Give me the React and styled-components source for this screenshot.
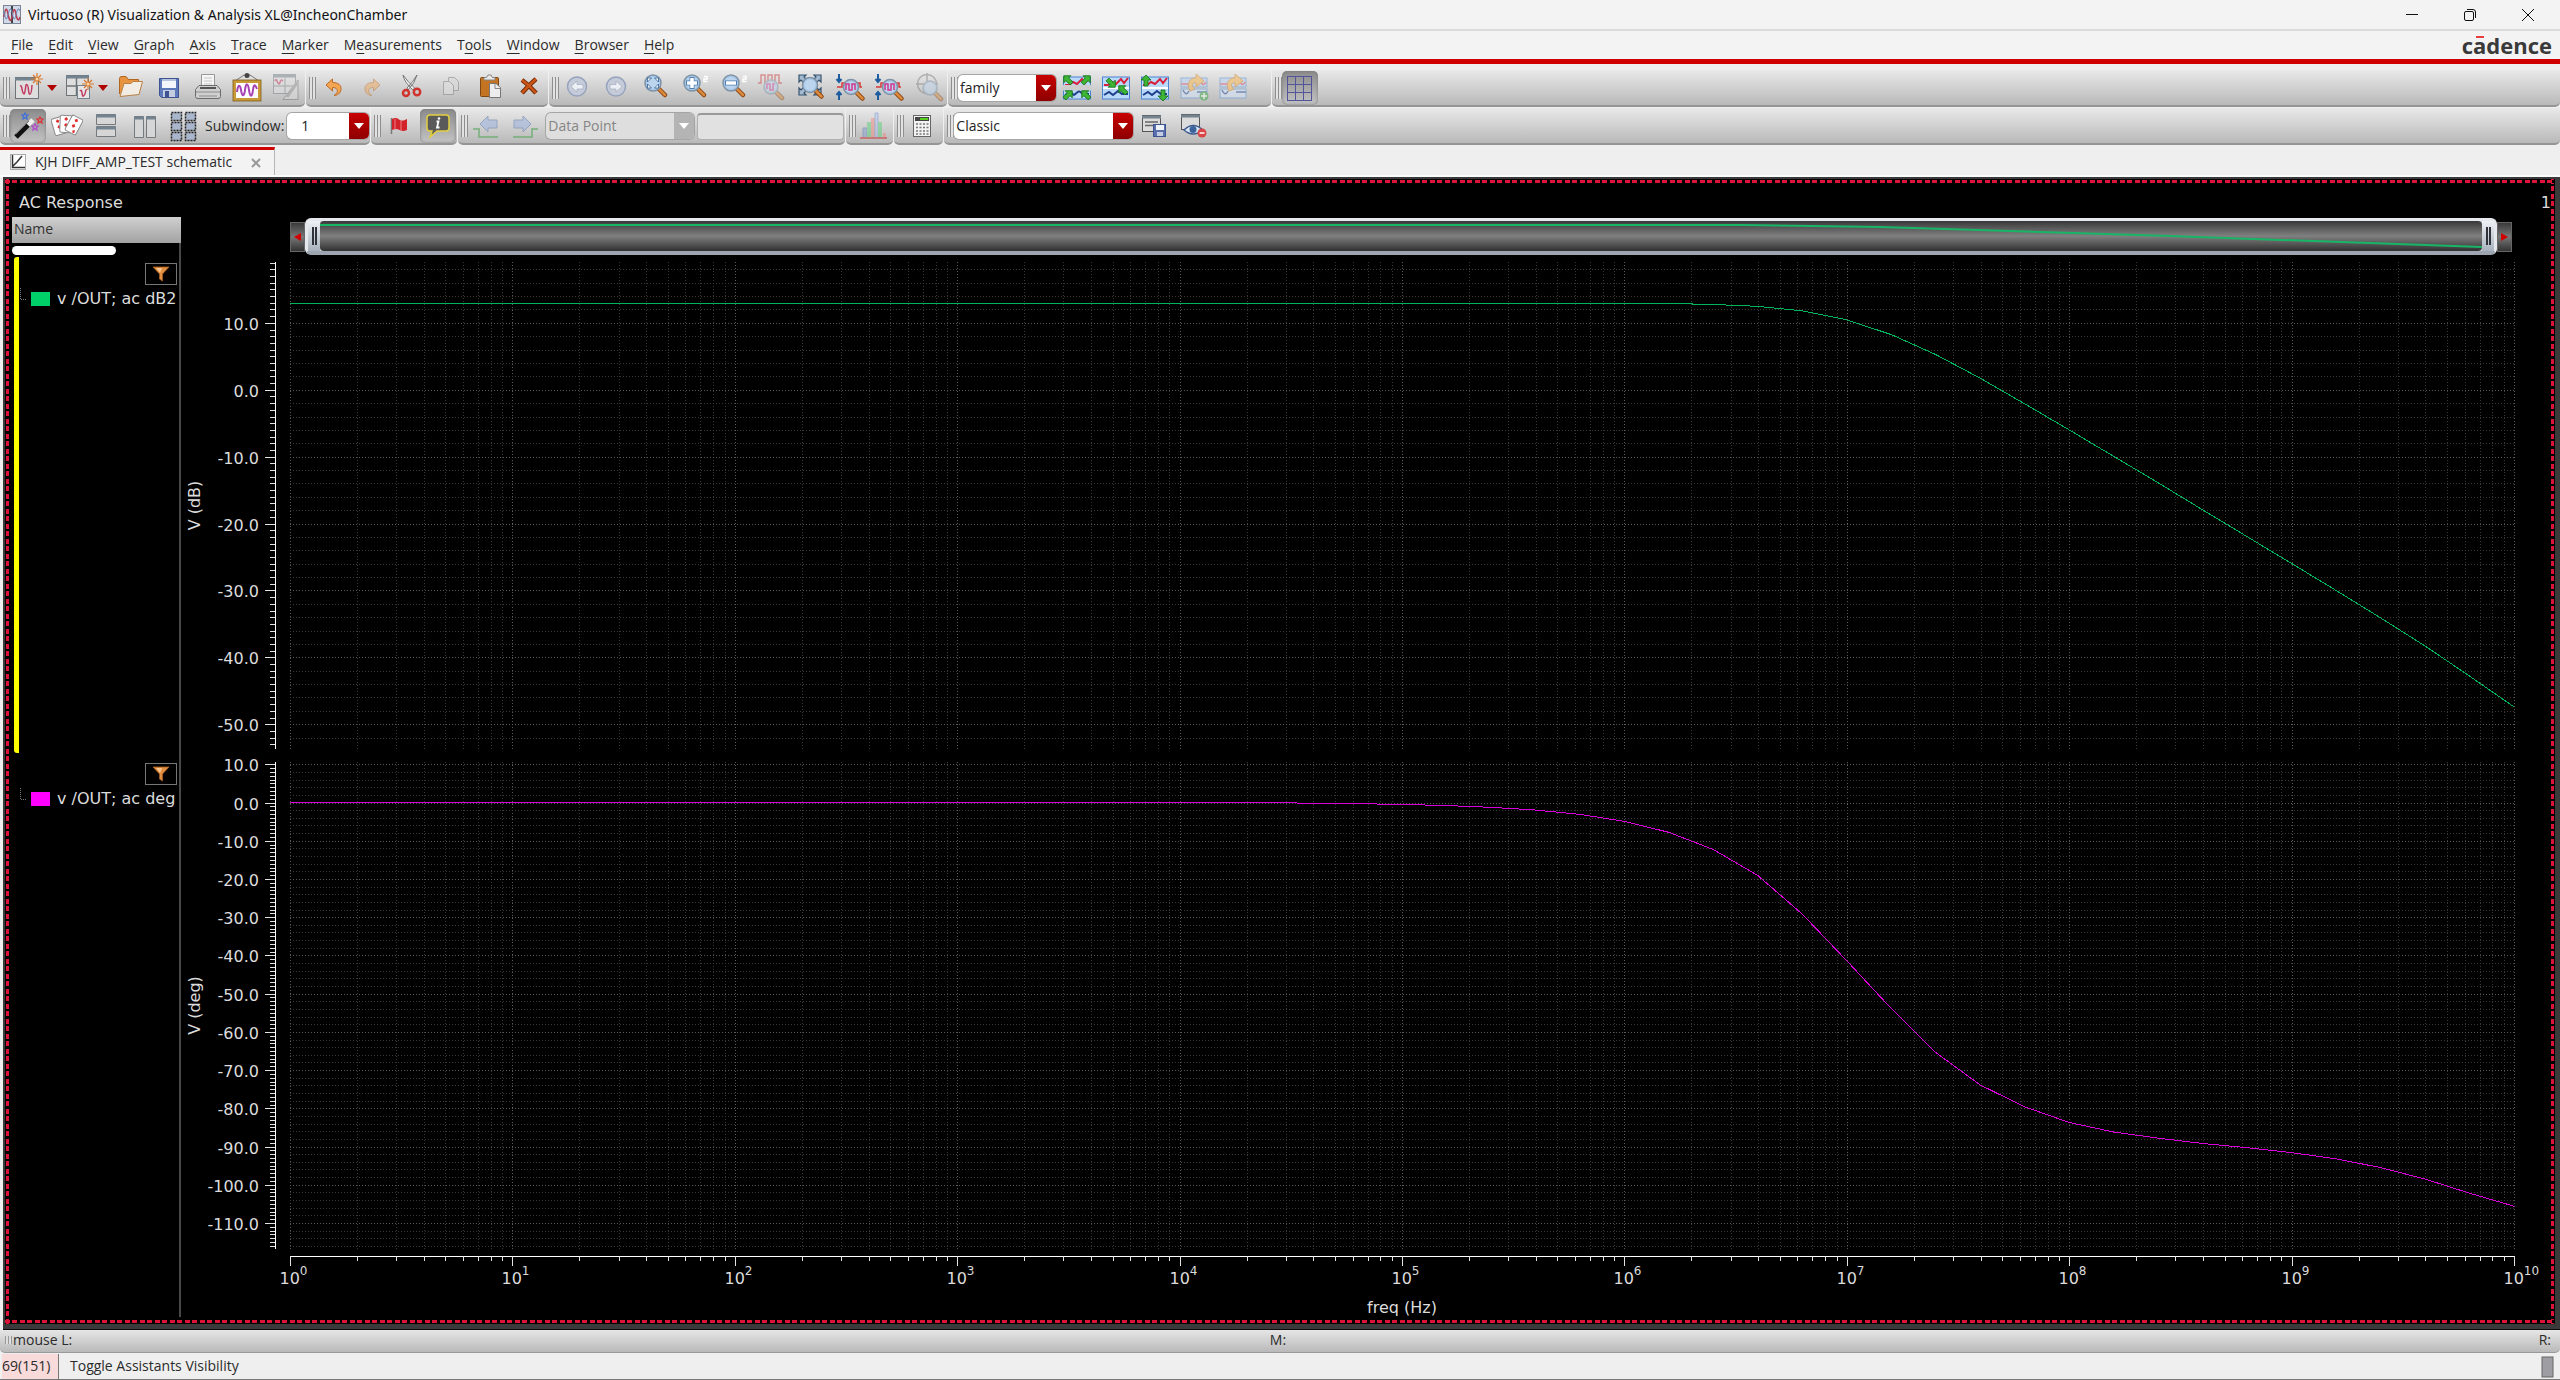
import React, { useLayoutEffect, useRef, useState } from "react";
import styled, { createGlobalStyle } from "styled-components";

const GlobalStyle = createGlobalStyle`
  * { box-sizing: border-box; }
  body {
    margin: 0;
    background: #efefef;
    color: #2b2b2b;
    font: 14px/20px "Open Sans", "Noto Sans", sans-serif;
  }
  button, input, select { font: inherit; color: inherit; margin: 0; }
  button { border: 0; padding: 0; background: none; }
`;

const Window = styled.div`
  display: flex;
  flex-direction: column;
  height: 100vh;
  min-height: 600px;
  overflow: hidden;
`;

/* ---------- title + menu ---------- */

const TitleBar = styled.header`
  display: flex;
  align-items: center;
  height: 29px;
  padding: 0 3px;
  gap: 7px;
  background: #f3f3f3;
  color: #111;
`;

const Title = styled.h1`
  flex: 1;
  margin: 0;
  font: 400 14px/20px "Noto Sans", sans-serif;
`;

const WindowControls = styled.div`
  display: flex;
  button { width: 58px; height: 28px; }
  svg { display: block; margin: 0 auto; }
`;

const MenuBar = styled.nav`
  display: flex;
  align-items: center;
  height: 35px;
  padding: 0 8px 0 4px;
  background: #f3f3f3;
  border-top: 2px solid #dadcdc;
  border-bottom: 5px solid #d00000;
`;

const MenuItem = styled.button`
  padding: 0 8px 0 7px;
  u { text-underline-offset: 3px; }
`;

const Logo = styled.div`
  position: relative;
  margin-left: auto;
  font: 700 22px/26px "Open Sans", sans-serif;
  color: #3a3a3a;
  &::before {
    content: "";
    position: absolute;
    left: 14px;
    top: 4px;
    width: 8px;
    height: 2px;
    background: #e53e3e;
  }
`;

/* ---------- toolbars ---------- */

const ToolbarRow = styled.div`
  display: flex;
  gap: 1px;
  margin-top: ${(p) => p.$top}px;
`;

const ToolGroup = styled.div`
  display: flex;
  align-items: center;
  gap: 3px;
  height: 37px;
  padding: 1px ${(p) => p.$end || 1}px 0 3px;
  flex: ${(p) => (p.$fill ? 1 : "none")};
  border-bottom: 2px solid #959595;
  border-radius: 0 0 5px 5px;
  background: linear-gradient(#e9e9e9, #b9b9b9);
`;

const Grip = styled.span`
  width: 7px;
  height: 22px;
  margin-right: -3px;
  background: repeating-linear-gradient(90deg, #8e8e8e 0 1px, #e2e2e2 1px 3px);
`;

const ToolButton = styled.button`
  display: flex;
  align-items: center;
  justify-content: center;
  width: ${(p) => (p.$narrow ? 12 : 36)}px;
  height: 34px;
  margin-left: ${(p) => (p.$narrow ? -3 : 0)}px;
  svg { display: block; flex: none; }
  &[aria-pressed="true"] {
    border-radius: 5px;
    background: linear-gradient(#8b8b8b, #c4c4c4);
    box-shadow: inset 0 0 3px #777;
  }
`;

const Combo = styled.span`
  display: flex;
  width: ${(p) => p.$width}px;
  height: 26px;
  border-radius: 5px;
  overflow: hidden;
  background: ${(p) => (p.$off ? "#dedede" : "#fff")};
  box-shadow: 0 0 0 1px #a5a5a5;
  select {
    flex: 1;
    min-width: 0;
    padding: 0 0 0 ${(p) => p.$indent || 2}px;
    border: 0;
    appearance: none;
    background: none;
    opacity: 1;
    color: ${(p) => (p.$off ? "#858585" : "#222")};
  }
  span {
    display: flex;
    align-items: center;
    justify-content: center;
    width: 20px;
    background: ${(p) => (p.$off ? "#b4b4b4" : "linear-gradient(#c80000, #8e0000)")};
  }
`;

const FieldLabel = styled.label`
  white-space: nowrap;
`;

const ValueInput = styled.input`
  width: 147px;
  height: 27px;
  border: 1px solid #b0b0b0;
  border-top: 2px solid #999;
  border-radius: 4px;
  background: #e1e1e1;
`;

/* ---------- tabs ---------- */

const TabBar = styled.div`
  display: flex;
  height: 30px;
  margin-top: 2px;
  border-bottom: 2px solid #fbfbfb;
`;

const Tab = styled.div`
  display: flex;
  align-items: center;
  width: 275px;
  padding: 0 9px 2px;
  gap: 7px;
  border-top: 3px solid #d00000;
  border-right: 1px solid #b5b5b5;
  background: #f3f3f3;
  white-space: nowrap;
  > button:last-child { margin-left: auto; width: 18px; height: 18px; }
`;

const TabName = styled.button`
  display: flex;
  align-items: center;
  gap: 8px;
`;

/* ---------- plot window ---------- */

const h = "repeating-linear-gradient(90deg, #dc1437 0 5px, #000 5px 7px, #dc1437 7px 12px, #000 12px 15px)";
const v = "repeating-linear-gradient(#dc1437 0 5px, #000 5px 7px, #dc1437 7px 12px, #000 12px 15px)";

const PlotFrame = styled.main`
  flex: 1;
  min-height: 0;
  display: flex;
  margin-left: 3px;
  padding: 2px 5px 5px 2px;
  background: #3a3a3a;
  border-bottom: 1px solid #0c0c0c;
`;

const PlotWindow = styled.section`
  flex: 1;
  min-width: 0;
  display: flex;
  flex-direction: column;
  padding: 2px 3px 2px 7px;
  color: #dcdcdc;
  font: 16px/20px "DejaVu Sans", sans-serif;
  background:
    ${h} 0 1px / 100% 3px no-repeat,
    ${h} 0 calc(100% - 1px) / 100% 3px no-repeat,
    ${v} 1px 0 / 3px 100% no-repeat,
    ${v} calc(100% - 1px) 0 / 3px 100% no-repeat,
    #000;
`;

const PlotHeader = styled.div`
  display: flex;
  justify-content: space-between;
  height: 36px;
  padding: 12px 1px 0 7px;
`;

const PlotBody = styled.div`
  flex: 1;
  min-height: 0;
  display: flex;
`;

const Legend = styled.aside`
  display: flex;
  flex-direction: column;
  width: 169px;
  margin-bottom: 5px;
  border-right: 2px solid #484848;
`;

const LegendHead = styled.div`
  height: 26px;
  margin-right: -2px;
  padding: 2px;
  background: linear-gradient(#d0d0d0, #a2a2a2);
  color: #333;
  font: 14px/20px "Open Sans", sans-serif;
`;

const LegendScroll = styled.div`
  width: 104px;
  height: 9px;
  margin: 3px 0 1px;
  border-radius: 5px;
  background: #fff;
`;

const LegendStrip = styled.div`
  flex: 1;
  display: flex;
  flex-direction: column;
  align-items: flex-end;
  margin: 1px 0 3px 2px;
  padding-top: 6px;
  border-left: 5px solid ${(p) => (p.$active ? "#ff0" : "#000")};
  border-radius: 3px;
`;

const FilterButton = styled.button`
  display: flex;
  align-items: center;
  justify-content: center;
  width: 32px;
  height: 22px;
  margin-right: 2px;
  border: 1px solid #777;
`;

const TraceRow = styled.div`
  align-self: stretch;
  display: flex;
  align-items: center;
  height: 28px;
  white-space: nowrap;
  svg { flex: none; }
`;

const Swatch = styled.span`
  flex: none;
  width: 19px;
  height: 14px;
  margin: 0 7px 0 4px;
  background: ${(p) => p.$color};
`;

const AxisSpace = styled.div`
  height: 61px;
`;

const Graph = styled.div`
  flex: 1;
  min-width: 0;
  display: flex;
  flex-direction: column;
  padding: 0 38px 0 109px;
`;

const PanBar = styled.div`
  display: flex;
  align-items: center;
  height: 39px;
  padding-right: 2px;
`;

const PanEnd = styled.button`
  width: 15px;
  height: 30px;
  display: flex;
  align-items: center;
  justify-content: center;
  border: 1px solid #666;
  background: linear-gradient(#3a3a3a, #777 50%, #333);
`;

const PanWindow = styled.div`
  flex: 1;
  min-width: 0;
  display: flex;
  height: 37px;
  border: 3px solid #e5e9ee;
  border-bottom: 4px solid #9ca5b0;
  border-radius: 6px;
  background: #cfd4da;
`;

const PanHandle = styled.span`
  display: flex;
  gap: 1px;
  align-items: center;
  justify-content: center;
  width: 12px;
  background: linear-gradient(#eef1f5, #a8b1bc);
  &::before, &::after { content: ""; width: 2px; height: 18px; background: #30343a; }
`;

const PanView = styled.div`
  flex: 1;
  min-width: 0;
  border-radius: 4px;
  background: linear-gradient(#383838, #808080 50%, #303030);
  svg { display: block; width: 100%; height: 100%; }
`;

const Strip = styled.div`
  flex: 1;
  min-height: 0;
  padding: 6px 0 7px;
`;

const Canvas = styled.svg`
  display: block;
  width: 100%;
  height: 100%;
  overflow: visible;
  fill: #dcdcdc;
`;

const AxisBox = styled.div`
  height: 66px;
`;

/* ---------- bottom bars ---------- */

const MouseBar = styled.div`
  display: grid;
  grid-template-columns: 1fr auto 1fr;
  align-items: center;
  height: 23px;
  padding: 0 9px 2px 5px;
  border-bottom: 1px solid #999;
  border-radius: 0 0 5px 5px;
  background: linear-gradient(#e6e6e6, #b9b9b9);
  span:first-child { display: flex; align-items: center; gap: 1px; }
  span:last-child { text-align: right; }
  i { width: 7px; height: 8px; background: repeating-linear-gradient(90deg, #999 0 1px, #ddd 1px 3px); }
`;

const StatusBar = styled.footer`
  display: flex;
  align-items: stretch;
  height: 27px;
  padding: 1px 6px 0 2px;
  border-bottom: 1px solid #777;
  line-height: 23px;
  span { width: 57px; border-right: 1px solid #777; background: #f8dada; }
  p { flex: 1; margin: 0; padding-left: 11px; }
  svg { align-self: center; }
`;

/* ---------- icons ---------- */

const Svg = ({ children, fade = 1 }) => (
  <svg width="32" height="32" viewBox="0 0 32 32" fill="none" opacity={fade} aria-hidden="true">
    {children}
  </svg>
);

const Burst = ({ x, y }) => (
  <g transform={`translate(${x} ${y})`} stroke="#d9772b" strokeWidth="1.2">
    <path d="M0-6V6M-6 0H6M-4-4L4 4M4-4L-4 4" />
    <circle r="1.500" fill="#ffd9a0" stroke="none" />
  </g>
);

const Lens = ({ x = 14, y = 11, r = 8, children }) => (
  <>
    <path d={`M${x + r - 2} ${y + r - 2}l6 6`} stroke="#8a4210" strokeWidth="4.5" strokeLinecap="round" />
    <path d={`M${x + r - 2} ${y + r - 2}l6 6`} stroke="#d98a3a" strokeWidth="2.5" strokeLinecap="round" />
    <circle cx={x} cy={y} r={r} fill="#a9c8e8" stroke="#7f93a6" strokeWidth="1.5" />
    <circle cx={x} cy={y} r={r - 2} fill="#cfe1f3" opacity="0.5" />
    {children}
  </>
);

const Sup2 = () => <path d="M26 4.500h3v2.500h-3v2.500h3.500" stroke="#fff" strokeWidth="1.500" />;

const Circle = ({ d }) => (
  <>
    <circle cx="16" cy="14.500" r="9.500" fill="#c5cbd8" stroke="#96a3bd" strokeWidth="1.500" />
    <path d={d} fill="#eceff4" stroke="#a4aebf" strokeWidth="0.700" />
  </>
);

const Undo = () => (
  <path
    d="M8 13L14.500 7V10.500C20 10.500 23.500 13 23 17.500C22.700 21 19.500 23.500 16 23.500C19 21.500 20 19.500 19 17.500C18.200 16 16.500 15.500 14.500 15.500V19Z"
    fill="#f2a552" stroke="#bc6a24"
  />
);

const MiniWaves = () => (
  <>
    <rect x="2.500" y="5" width="27" height="22" fill="#b9d8fa" stroke="#4a86cf" />
    <path d="M3 16H29" stroke="#fff" strokeWidth="2" />
    <path d="M4 13l4 0 4-3 4 2 5-5 3 4 4-5" stroke="#d8203a" strokeWidth="2" />
    <path d="M4 23l5-3 4 3 5-4 4 3h6" stroke="#1d3f8c" strokeWidth="2" />
  </>
);

// head points up; rotate for the other directions
const GreenArrow = ({ x, y, turn = 0 }) => (
  <path
    transform={`translate(${x} ${y}) rotate(${turn})`}
    d="M0-6L5-1H2V5H-2V-1H-5Z" fill="#3eb534" stroke="#14701a" strokeWidth="0.800"
  />
);

const LevelZoom = () => (
  <>
    <path d="M5 2V9M2.500 7L5 10L7.500 7M5 28V20M2.500 23L5 20L7.500 23" stroke="#1d5c9f" strokeWidth="2" />
    <path d="M3 15H8V11H11M22 11H26V15H28" stroke="#d63a3a" strokeWidth="1.500" />
    <Lens x={17} y={15} r={7.500}>
      <path d="M12 18V12H15V18H18V12H21V18" stroke="#d1358c" strokeWidth="1.500" />
    </Lens>
  </>
);

const StepWave = () => (
  <>
    <rect x="3" y="6" width="26" height="9" fill="#bcd5f2" stroke="#6f9fd8" />
    <rect x="3" y="17" width="26" height="9" fill="#d5e5f8" stroke="#6f9fd8" />
    <path d="M3 12H11M23 10Q26 15 28 10" stroke="#e0636d" strokeWidth="1.500" />
    <path d="M5 18Q8 25 11 19M19 20H29" stroke="#41609f" strokeWidth="1.500" />
    <path d="M12 19C8 12 12 5 18 6V2L26 9L18 15V11C14 10 13 14 17 17Z" fill="#f5bc62" stroke="#d2924a" />
  </>
);

const Card = ({ turn, x, y }) => (
  <g transform={`translate(${x} ${y}) rotate(${turn})`}>
    <rect x="-6" y="-8.500" width="12" height="17" rx="1.500" fill="#fff" stroke="#8b8b8b" />
    <path d="M-2-5l2 2 2-2-2-2zM-2 1l2 2 2-2-2-2zM1 6l2 2 1-2-1-2z" fill="#e03030" />
  </g>
);

const Star = ({ x, y, color }) => (
  <path
    transform={`translate(${x} ${y})`} stroke={color} strokeWidth="1.200"
    d="M0-3L1-1H3L1.500 0.500L2 3L0 1.500L-2 3L-1.500 0.500L-3-1H-1Z"
  />
);

const icons = {
  newWindow: <Svg><rect x="3.500" y="5.500" width="23" height="21" fill="#dedede" stroke="#6f7478" /><path d="M3 7H27" stroke="#73838f" strokeWidth="3" /><path d="M8 14Q9.500 13 10 17T12 22Q13 21 13.500 16T15 13Q16 13 16.500 18T18 22Q19.500 22 20 13" stroke="#c23b62" strokeWidth="1.500" /><Burst x={25} y={7} /></Svg>,
  newSub: <Svg><rect x="3.500" y="3.500" width="22" height="20" fill="#dedede" stroke="#6f7478" /><path d="M3 5H26" stroke="#73838f" strokeWidth="3" /><path d="M3 14H26M13.500 6V24" stroke="#6f7478" strokeWidth="1.500" /><rect x="14.500" y="13.500" width="12" height="13" fill="#e5e5e5" stroke="#73838f" /><path d="M17 19Q18.500 17 19 21T20.500 24Q22 23 22.500 20T24 18" stroke="#c23b62" strokeWidth="1.500" /><Burst x={25} y={12} /></Svg>,
  open: <Svg><path d="M5.500 22V6.500Q5.500 4.500 8 4.500H12L14.500 7.500H24.500V12" fill="#e89340" stroke="#b0641f" /><path d="M6 24.500L10 11.500H17L19 9.500H28.500L25 22.500Z" fill="#f1ece4" stroke="#b98043" /></Svg>,
  save: <Svg><path d="M6.500 6.500H25.500V25.500H8.500L6.500 23.500Z" fill="#5c79bc" stroke="#3d5490" /><rect x="9" y="7" width="14" height="9" fill="#f3f6fb" /><path d="M9 8H23" stroke="#b5c2dd" strokeWidth="2" /><rect x="10" y="18" width="12" height="7" fill="#c4cde0" /><rect x="12" y="19" width="4" height="6" fill="#3d5490" /></Svg>,
  print: <Svg><path d="M9.500 15V2.500H22.500V15" fill="#f5f5f5" stroke="#999" /><path d="M12 6H20M12 9H20M12 12H20" stroke="#c6c6c6" /><path d="M3.500 17.500L7 13.500H25L28.500 17.500V24.500Q28.500 26.500 26 26.500H6Q3.500 26.500 3.500 24.500Z" fill="#cfcfcf" stroke="#6c6c6c" /><path d="M8 16H24" stroke="#555" strokeWidth="2" /><path d="M4 20H28M7 24H25" stroke="#8d8d8d" /></Svg>,
  image: <Svg><path d="M4 9L13 3H19L28 9" stroke="#777" /><circle cx="16" cy="3.500" r="2.500" fill="#444" /><rect x="3.500" y="9.500" width="25" height="18" fill="#fff" stroke="#c99a38" strokeWidth="3" /><rect x="2" y="8" width="28" height="21" stroke="#7d5c1b" strokeWidth="0.800" /><path d="M6 20C7 12 9 12 10 18S13 26 14 18S17 11 18 18S21 26 22 18S25 14 26 17" stroke="#a743b5" strokeWidth="2" /></Svg>,
  editWindow: <Svg fade={0.5}><rect x="3.500" y="2.500" width="22" height="19" fill="#e0e0e0" stroke="#7b8085" /><path d="M3 4H26" stroke="#73838f" strokeWidth="3" /><path d="M15 6V22M3 14H15M15 14H25" stroke="#7b8085" /><path d="M5 9Q6 6 7 9T9 12Q10 11 10.500 9T13 9" stroke="#c23b62" strokeWidth="1.500" /><path d="M13 27.500L28 8V27.500Z" fill="#ddd" stroke="#777" /><path d="M17 25L27 11" stroke="#999" strokeWidth="3" /></Svg>,
  undo: <Svg><Undo /></Svg>,
  redo: <Svg fade={0.45}><g transform="translate(31 0) scale(-1 1)"><Undo /></g></Svg>,
  cut: <Svg><path d="M7 3Q8 10 17 18L18.500 16Q11 9 7 3ZM21 3Q19 11 12 18L11 16Q17 10 21 3Z" fill="#f4f4f4" stroke="#777" /><circle cx="10" cy="21" r="3" stroke="#d0342c" strokeWidth="2.500" /><circle cx="21" cy="20" r="3.200" stroke="#d0342c" strokeWidth="2.500" /></Svg>,
  copy: <Svg fade={0.6}><path d="M13.500 5.500H19.500L23.500 9.500V18.500H13.500Z" fill="#d9d9d9" stroke="#8c8c8c" /><path d="M8.500 9.500H14.500L18.500 13.500V22.500H8.500Z" fill="#dedede" stroke="#8c8c8c" /></Svg>,
  paste: <Svg><rect x="6.500" y="5.500" width="18" height="19" rx="1" fill="#c47322" stroke="#7f4711" /><path d="M10 8V5.500H12.500L14 3H17L18.500 5.500H21V8Z" fill="#e8e8e8" stroke="#888" /><path d="M15.500 11.500H22L26.500 15.500V25.500H15.500Z" fill="#ededed" stroke="#777" /><path d="M21 12V16.500H26" stroke="#888" /></Svg>,
  remove: <Svg><path d="M9 8Q16 13 23 21M23 7Q16 13 9 21" stroke="#762c06" strokeWidth="4.500" /><path d="M9 8Q16 13 23 21M23 7Q16 13 9 21" stroke="#cb5518" strokeWidth="2.500" /></Svg>,
  back: <Svg><Circle d="M10 14.500L16 9V12.500H22V17H16V20Z" /></Svg>,
  forward: <Svg><Circle d="M22 14.500L16 9V12.500H10V17H16V20Z" /></Svg>,
  zoomFit: <Svg><Lens><path d="M8.500 6H12.500L8.500 10ZM19.500 6V10L15.500 6ZM8.500 16V12L12.500 16ZM19.500 16H15.500L19.500 12Z" fill="#fff" stroke="#2f6096" strokeWidth="0.800" /></Lens></Svg>,
  zoomIn: <Svg><Lens><path d="M14 5V17M8 11H20" stroke="#4f7dad" strokeWidth="5" /><path d="M14 6V16M9 11H19" stroke="#fff" strokeWidth="3.500" /></Lens><Sup2 /></Svg>,
  zoomOut: <Svg><Lens><path d="M8 11H20" stroke="#4f7dad" strokeWidth="5" /><path d="M9 11H19" stroke="#fff" strokeWidth="3.500" /></Lens><Sup2 /></Svg>,
  zoomWave: <Svg fade={0.45}><path d="M2 11H5V3H9V11H12V3H16V11H19V3H23V11H26" stroke="#c33" strokeWidth="1.500" /><Lens x={15} y={15} r={7}><path d="M11 17V12H14V18H17V12H19" stroke="#d1358c" strokeWidth="1.500" /></Lens></Svg>,
  fitAll: <Svg><path d="M4 10V3H11L9 5L12 8L9 11L6 8ZM26 10V3H19L21 5L18 8L21 11L24 8ZM4 16V23H11L9 21L12 18L9 15L6 18ZM26 16V23H19L21 21L18 18L21 15L24 18Z" fill="#a5bbd2" stroke="#34526e" strokeWidth="1.200" /><Lens x={15} y={13} r={7.500} /></Svg>,
  levelA: <Svg><LevelZoom /></Svg>,
  levelB: <Svg><LevelZoom /></Svg>,
  target: <Svg fade={0.45}><circle cx="15" cy="12" r="9.500" stroke="#777" strokeWidth="1.500" /><path d="M15 1V23M4 12H26" stroke="#777" strokeWidth="1.500" /><Lens x={18} y={16} r={7} /></Svg>,
  expand: <Svg><MiniWaves /><path d="M1 13H31V18.500H1Z" fill="#cdcdcd" /><GreenArrow x={7} y={8} turn={-45} /><GreenArrow x={25} y={8} turn={45} /><GreenArrow x={7} y={23} turn={45} /><GreenArrow x={25} y={23} turn={-45} /></Svg>,
  collapse: <Svg><MiniWaves /><GreenArrow x={11} y={11} turn={135} /><GreenArrow x={23} y={18} turn={-45} /></Svg>,
  spread: <Svg><MiniWaves /><GreenArrow x={7} y={9} /><GreenArrow x={24} y={23} turn={180} /></Svg>,
  stepAdd: <Svg fade={0.6}><StepWave /><circle cx="26" cy="24" r="4.500" fill="#4fae57" /><path d="M26 21V27M23 24H29" stroke="#fff" strokeWidth="1.500" /></Svg>,
  step: <Svg fade={0.6}><StepWave /></Svg>,
  grid: <Svg><path d="M3.500 4V29M11.500 4V29M19.500 4V29M27.500 4V29M3 4.500H28M3 12.500H28M3 20.500H28M3 28.500H28" stroke="#54549c" /></Svg>,
  wand: <Svg><path d="M4 27L19 12" stroke="#111" strokeWidth="5" /><path d="M16 15L21 10" stroke="#eee" strokeWidth="5" /><path d="M4 24L17 11" stroke="#777" /><Star x={13} y={6} color="#3f6fd8" /><Star x={28} y={10} color="#e03030" /><Star x={23} y={17} color="#b04ad0" /></Svg>,
  cards: <Svg><Card x={8} y={16} turn={-16} /><Card x={15} y={14} turn={2} /><Card x={23} y={15} turn={28} /></Svg>,
  rows: <Svg><path d="M6.500 4.500H25.500V14.500H6.500ZM6.500 16.500H25.500V26.500H6.500Z" fill="#d6d6d6" stroke="#74797d" /><path d="M6 6H26M6 18H26" stroke="#73838f" strokeWidth="3" /></Svg>,
  columns: <Svg><path d="M5.500 6.500H14.500V27.500H5.500ZM17.500 6.500H26.500V27.500H17.500Z" fill="#d6d6d6" stroke="#74797d" /><path d="M5 8H15M17 8H27" stroke="#73838f" strokeWidth="3" /></Svg>,
  tiles: <Svg><path d="M3.500 2.500H13.500V10.500H3.500ZM17.500 2.500H27.500V10.500H17.500ZM3.500 12.500H13.500V20.500H3.500ZM17.500 12.500H27.500V20.500H17.500ZM3.500 22.500H13.500V30.500H3.500ZM17.500 22.500H27.500V30.500H17.500Z" fill="#aab6cc" stroke="#222" strokeWidth="1.500" strokeDasharray="2 1" /></Svg>,
  flag: <Svg><path d="M8.500 8V24" stroke="#777" strokeWidth="1.500" /><path d="M9 9Q13 7 16 9.500T24 9V20Q20 22 16.500 20T9 20Z" fill="#d2232a" /><path d="M12 9V20M18 10V21" stroke="#f08080" /></Svg>,
  info: <Svg><path d="M8 5H24Q27 5 27 8V18Q27 21 24 21H15L8 27L10 21H8Q5 21 5 18V8Q5 5 8 5Z" fill="#5a5a5a" stroke="#e2cf3e" strokeWidth="1.500" /><path d="M14.500 11.500H16.500L15 17.500H17.500" stroke="#fff" strokeWidth="1.800" /><circle cx="17" cy="8.500" r="1.300" fill="#fff" /></Svg>,
  prev: <Svg fade={0.7}><path d="M3 19H9V27H28" stroke="#6fae74" strokeWidth="2" /><path d="M10 14L18 6V10H27V18H18V22Z" fill="#aabbdc" stroke="#7d90b8" /></Svg>,
  next: <Svg fade={0.7}><path d="M29 19H23V27H4" stroke="#6fae74" strokeWidth="2" /><path d="M22 14L14 6V10H5V18H14V22Z" fill="#aabbdc" stroke="#7d90b8" /></Svg>,
  bars: <Svg fade={0.5}><path d="M5 28V18H9V28" fill="#88a0d0" stroke="#5f7ab8" /><path d="M9 28V12H13V28" fill="#5fd07a" /><path d="M13 28V8H17V28" fill="#f08a80" /><path d="M17 28V3H20V28" fill="#b5c6ef" stroke="#6f8fd0" /><path d="M20 28V12H24V28" fill="#5fd07a" /><path d="M25 28V23H28V28" fill="#f08a80" /><path d="M2 28H29" stroke="#c33" strokeWidth="2" /></Svg>,
  calc: <Svg><rect x="7.500" y="5.500" width="17" height="21" fill="#f2f2f2" stroke="#666" /><path d="M9 9H23" stroke="#444" strokeWidth="4" /><path d="M14 9H22" stroke="#58d020" strokeWidth="2" /><path d="M10 14H23M10 17.500H23M10 21H23M10 24H23" stroke="#777" strokeWidth="1.500" strokeDasharray="2 1.500" /></Svg>,
  saveLayout: <Svg><rect x="4.500" y="5.500" width="18" height="16" fill="#dcdcdc" stroke="#555" /><path d="M4 7H23" stroke="#73838f" strokeWidth="3" /><path d="M7 12H20M7 15.500H20" stroke="#666" strokeWidth="1.500" /><rect x="15.500" y="14.500" width="12" height="12" fill="#5a6fae" stroke="#3d5490" /><rect x="18" y="15" width="8" height="5" fill="#eef2fa" /><rect x="19" y="22" width="6" height="4" fill="#c4cde0" /></Svg>,
  hideLayout: <Svg><rect x="4.500" y="4.500" width="18" height="15" fill="#dcdcdc" stroke="#555" /><path d="M4 6H23" stroke="#73838f" strokeWidth="3" /><path d="M7 20Q16 11 26 20Q16 28 7 20Z" fill="#dbe6f5" stroke="#3d5a8c" strokeWidth="1.500" /><circle cx="16" cy="19.500" r="3.500" fill="#3c639c" /><circle cx="25" cy="23" r="4.500" fill="#d94444" /><path d="M22.500 23H27.500" stroke="#fff" strokeWidth="1.500" /></Svg>,
};

const Caret = ({ color = "#b00000" }) => (
  <svg width="10" height="6" viewBox="0 0 10 6" aria-hidden="true"><path d="M0 0H10L5 6Z" fill={color} /></svg>
);

const Funnel = () => (
  <svg width="18" height="16" viewBox="0 0 18 16" aria-hidden="true">
    <path d="M1 1H17L10.500 8V15L7.500 13V8Z" fill="#e08f42" stroke="#a65c1c" strokeWidth="0.800" />
    <path d="M4 2H10L8 7Z" fill="#f8c38d" />
  </svg>
);

function Tool({ name, label, pressed, disabled }) {
  return (
    <ToolButton type="button" title={label} aria-label={label} aria-pressed={pressed} disabled={disabled}>
      {icons[name]}
    </ToolButton>
  );
}

function Drop({ label }) {
  return <ToolButton type="button" $narrow aria-label={label}><Caret /></ToolButton>;
}

function ComboBox({ id, label, options, width, indent, off }) {
  return (
    <Combo $width={width} $indent={indent} $off={off}>
      <select id={id} aria-label={label} disabled={off}>
        {options.map((o) => <option key={o}>{o}</option>)}
      </select>
      <span><Caret color="#fff" /></span>
    </Combo>
  );
}

/* ---------- charts ---------- */

// one sample every fifth of a decade, from 10^0 to 10^10
const gainTail = [12.9, 12.9, 12.75, 12.47, 11.8, 10.45, 8.25, 5.26, 1.73, -2.1, -6, -9.95, -13.9, -17.95, -21.96, -25.96, -30, -34.1, -38.3, -42.8, -47.4];
const gain = [...Array(30).fill(12.95), ...gainTail];
const phaseTail = [-0.5, -0.8, -1.25, -1.97, -3.1, -4.93, -7.8, -12.3, -19.1, -29.2, -41.4, -53.9, -65.4, -73.9, -79.6, -83.7, -86.2, -87.8, -89.2, -90.3, -91.6, -93.2, -95.5, -98.5, -102.2, -105.6];
const phase = [...Array(23).fill(0), -0.2, -0.3, ...phaseTail];

const DECADES = 10;
const range = (from, to, step) => {
  const out = [];
  for (let n = from; n <= to; n += step) out.push(n);
  return out;
};

function useSize() {
  const ref = useRef(null);
  const [size, setSize] = useState({ w: 0, h: 0 });
  useLayoutEffect(() => {
    const measure = () => {
      const box = ref.current.getBoundingClientRect();
      setSize({ w: box.width, h: box.height });
    };
    measure();
    const watcher = new ResizeObserver(measure);
    watcher.observe(ref.current);
    return () => watcher.disconnect();
  }, []);
  return [ref, size];
}

const logTicks = [];
for (let d = 0; d < DECADES; d++) {
  for (let k = 1; k < 10; k++) logTicks.push({ at: d + Math.log10(k), major: k === 1 });
}
logTicks.push({ at: DECADES, major: true });

function Chart({ title, data, color, top, bottom }) {
  const [ref, { w, h: height }] = useSize();
  const x = (d) => Math.round((d / DECADES) * w) + 0.5;
  const y = (val) => ((top - val) / (top - bottom)) * height;
  const yr = (val) => Math.round(y(val)) + 0.5;
  const values = range(Math.ceil(bottom), Math.floor(top), 1);

  return (
    <Canvas ref={ref} role="img" aria-label={title}>
      <g strokeDasharray="1 2">
        {logTicks.map((t) => (
          <path key={t.at} d={`M${x(t.at)} 0V${height}`} stroke={t.major ? "#5a5a5a" : "#383838"} />
        ))}
        {values.filter((n) => n % 2 === 0).map((n) => (
          <path key={n} d={`M0 ${yr(n)}H${w}`} stroke={n % 10 === 0 ? "#5a5a5a" : "#383838"} />
        ))}
      </g>
      <path d={`M-14.500 0V${height}`} stroke="#fff" />
      {values.map((n) => (
        <path key={n} d={`M${n % 10 === 0 ? -25 : -20} ${yr(n)}H-15`} stroke="#e4e4e4" />
      ))}
      {values.filter((n) => n % 10 === 0).map((n) => (
        <text key={n} x="-31" y={yr(n) + 6.500} textAnchor="end">{n.toFixed(1)}</text>
      ))}
      <text transform={`translate(-90 ${height / 2}) rotate(-90)`} textAnchor="middle">{title}</text>
      <polyline
        points={data.map((val, i) => `${(i / 50) * w},${y(val)}`).join(" ")}
        fill="none" stroke={color} strokeWidth="1" shapeRendering="crispEdges"
      />
    </Canvas>
  );
}

function FreqAxis() {
  const [ref, { w }] = useSize();
  const x = (d) => Math.round((d / DECADES) * w) + 0.5;
  return (
    <AxisBox>
      <Canvas ref={ref} role="img" aria-label="freq (Hz)">
        <path d={`M0 0.500H${w + 1}`} stroke="#fff" />
        {logTicks.map((t) => (
          <path key={t.at} d={`M${x(t.at)} 0V${t.major ? 10 : 5}`} stroke="#e4e4e4" />
        ))}
        {range(0, DECADES, 1).map((d) => (
          <text key={d} x={x(d) - 11} y="28">
            10<tspan dy="-9" fontSize="12">{d}</tspan>
          </text>
        ))}
        <text x={w / 2} y="57" textAnchor="middle">freq (Hz)</text>
      </Canvas>
    </AxisBox>
  );
}

const menus = [["", "F", "ile"], ["", "E", "dit"], ["", "V", "iew"], ["", "G", "raph"], ["", "A", "xis"], ["", "T", "race"], ["", "M", "arker"], ["M", "e", "asurements"], ["T", "o", "ols"], ["", "W", "indow"], ["", "B", "rowser"], ["", "H", "elp"]];

const traces = [
  { name: "v /OUT; ac dB2", color: "#00d068", active: true },
  { name: "v /OUT; ac deg", color: "#ff00ff" },
];

function App() {
  return (
    <Window>
      <GlobalStyle />
      <TitleBar>
        <svg width="18" height="19" viewBox="0 0 18 19" fill="none" aria-hidden="true">
          <rect x="0.500" y="0.500" width="17" height="18" fill="#cfd9e8" stroke="#7a8698" />
          <path d="M9 1V18" stroke="#111" strokeWidth="1.500" />
          <path d="M1 12Q3-2 5 9T9 12Q11-1 13 9T17 12" stroke="#b83a4c" strokeWidth="1.500" />
          <path d="M1 6Q3 20 5 10T9 6Q11 20 13 10T17 6" stroke="#6f88b8" />
        </svg>
        <Title>Virtuoso (R) Visualization &amp; Analysis XL@IncheonChamber</Title>
        <WindowControls>
          <button type="button" aria-label="Minimize"><svg width="14" height="14" stroke="#111"><path d="M1 6.500H13" /></svg></button>
          <button type="button" aria-label="Restore"><svg width="14" height="14" fill="none" stroke="#111"><rect x="1.500" y="3.500" width="9" height="9" rx="1.500" /><path d="M4 1.500H10Q12.500 1.500 12.500 4V10" /></svg></button>
          <button type="button" aria-label="Close"><svg width="14" height="14" stroke="#111"><path d="M1 1L13 13M13 1L1 13" /></svg></button>
        </WindowControls>
      </TitleBar>

      <MenuBar>
        {menus.map(([a, key, b]) => (
          <MenuItem type="button" key={a + key + b}>{a}<u>{key}</u>{b}</MenuItem>
        ))}
        <Logo>cadence</Logo>
      </MenuBar>

      <ToolbarRow $top={6}>
        <ToolGroup>
          <Grip />
          <Tool name="newWindow" label="New window" />
          <Drop label="New window options" />
          <Tool name="newSub" label="New subwindow" />
          <Drop label="New subwindow options" />
          <Tool name="open" label="Open" />
          <Tool name="save" label="Save" />
          <Tool name="print" label="Print" />
          <Tool name="image" label="Save image" />
          <Tool name="editWindow" label="Edit window" disabled />
        </ToolGroup>
        <ToolGroup>
          <Grip />
          <Tool name="undo" label="Undo" />
          <Tool name="redo" label="Redo" disabled />
          <Tool name="cut" label="Cut" />
          <Tool name="copy" label="Copy" disabled />
          <Tool name="paste" label="Paste" />
          <Tool name="remove" label="Delete" />
        </ToolGroup>
        <ToolGroup>
          <Grip />
          <Tool name="back" label="Previous view" disabled />
          <Tool name="forward" label="Next view" disabled />
          <Tool name="zoomFit" label="Fit" />
          <Tool name="zoomIn" label="Zoom in by 2" />
          <Tool name="zoomOut" label="Zoom out by 2" />
          <Tool name="zoomWave" label="Zoom to waveform" disabled />
          <Tool name="fitAll" label="Fit all" />
          <Tool name="levelA" label="Fit Y" />
          <Tool name="levelB" label="Fit smart" />
          <Tool name="target" label="Centre" disabled />
        </ToolGroup>
        <ToolGroup $end={20}>
          <Grip />
          <ComboBox label="Strip mode" options={["family"]} width={98} />
          <Tool name="expand" label="Split all strips" />
          <Tool name="collapse" label="Combine all" />
          <Tool name="spread" label="Split current strip" />
          <Tool name="stepAdd" label="Add to strip" disabled />
          <Tool name="step" label="Move to strip" disabled />
        </ToolGroup>
        <ToolGroup $fill>
          <Grip />
          <Tool name="grid" label="Grid" pressed />
        </ToolGroup>
      </ToolbarRow>

      <ToolbarRow $top={1}>
        <ToolGroup>
          <Grip />
          <Tool name="wand" label="Toggle Assistants Visibility" pressed />
          <Tool name="cards" label="Card layout" />
          <Tool name="rows" label="Horizontal layout" />
          <Tool name="columns" label="Vertical layout" />
          <Tool name="tiles" label="Auto layout" />
          <FieldLabel htmlFor="subwindow">Subwindow:</FieldLabel>
          <ComboBox id="subwindow" options={["1"]} width={82} indent={14} />
        </ToolGroup>
        <ToolGroup>
          <Grip />
          <Tool name="flag" label="Marker" />
          <Tool name="info" label="Tracking cursor" pressed />
        </ToolGroup>
        <ToolGroup>
          <Grip />
          <Tool name="prev" label="Previous edge" disabled />
          <Tool name="next" label="Next edge" disabled />
          <ComboBox label="Search type" options={["Data Point"]} width={148} off />
          <ValueInput aria-label="Search value" disabled />
        </ToolGroup>
        <ToolGroup>
          <Grip />
          <Tool name="bars" label="Histogram" disabled />
        </ToolGroup>
        <ToolGroup $end={3}>
          <Grip />
          <Tool name="calc" label="Calculator" />
        </ToolGroup>
        <ToolGroup $fill>
          <Grip />
          <ComboBox label="Workspace" options={["Classic"]} width={179} />
          <Tool name="saveLayout" label="Save workspace" />
          <Tool name="hideLayout" label="Delete workspace" />
        </ToolGroup>
      </ToolbarRow>

      <TabBar>
        <Tab>
          <TabName type="button">
            <svg width="18" height="18" viewBox="0 0 18 18" fill="none" aria-hidden="true">
              <rect x="1.500" y="1.500" width="15" height="15" fill="#fff" stroke="#aaa" />
              <path d="M3.500 2V14.500H16M4 13L8 9L13 3" stroke="#333" strokeWidth="1.500" />
            </svg>
            KJH DIFF_AMP_TEST schematic
          </TabName>
          <button type="button" aria-label="Close tab">
            <svg width="10" height="10" stroke="#999" strokeWidth="2"><path d="M1 1L9 9M9 1L1 9" /></svg>
          </button>
        </Tab>
      </TabBar>

      <PlotFrame>
        <PlotWindow>
          <PlotHeader>
            <span>AC Response</span>
            <span>1</span>
          </PlotHeader>
          <PlotBody>
            <Legend>
              <LegendHead>Name</LegendHead>
              <LegendScroll />
              {traces.map((t) => (
                <LegendStrip key={t.name} $active={t.active}>
                  <FilterButton type="button" aria-label={`Filter ${t.name}`}><Funnel /></FilterButton>
                  <TraceRow>
                    <svg width="8" height="26" fill="none" aria-hidden="true">
                      <path d="M1.500 2V13.500H8" stroke="#777" strokeDasharray="1 1" />
                    </svg>
                    <Swatch $color={t.color} />
                    {t.name}
                  </TraceRow>
                </LegendStrip>
              ))}
              <AxisSpace />
            </Legend>
            <Graph>
              <PanBar>
                <PanEnd type="button" aria-label="Pan left">
                  <svg width="7" height="8"><path d="M7 0V8L0 4Z" fill="#d00000" /></svg>
                </PanEnd>
                <PanWindow>
                  <PanHandle />
                  <PanView>
                    <svg viewBox="0 0 2162 30" preserveAspectRatio="none" fill="none">
                      <path d="M0 4H1420L1560 6L1850 15L2162 26" stroke="#18b566" strokeWidth="2" />
                    </svg>
                  </PanView>
                  <PanHandle />
                </PanWindow>
                <PanEnd type="button" aria-label="Pan right">
                  <svg width="7" height="8"><path d="M0 0V8L7 4Z" fill="#d00000" /></svg>
                </PanEnd>
              </PanBar>
              <Strip><Chart title="V (dB)" data={gain} color="#00b45a" top={19.1} bottom={-53.7} /></Strip>
              <Strip><Chart title="V (deg)" data={phase} color="#d800d8" top={10.6} bottom={-116.8} /></Strip>
              <FreqAxis />
            </Graph>
          </PlotBody>
        </PlotWindow>
      </PlotFrame>

      <MouseBar>
        <span><i />mouse L:</span>
        <span>M:</span>
        <span>R:</span>
      </MouseBar>
      <StatusBar>
        <span>69(151)</span>
        <p>Toggle Assistants Visibility</p>
        <svg width="13" height="22" aria-hidden="true">
          <rect x="1" y="1" width="11" height="20" fill="#9d9da3" stroke="#666" />
        </svg>
      </StatusBar>
    </Window>
  );
}

export default App;
